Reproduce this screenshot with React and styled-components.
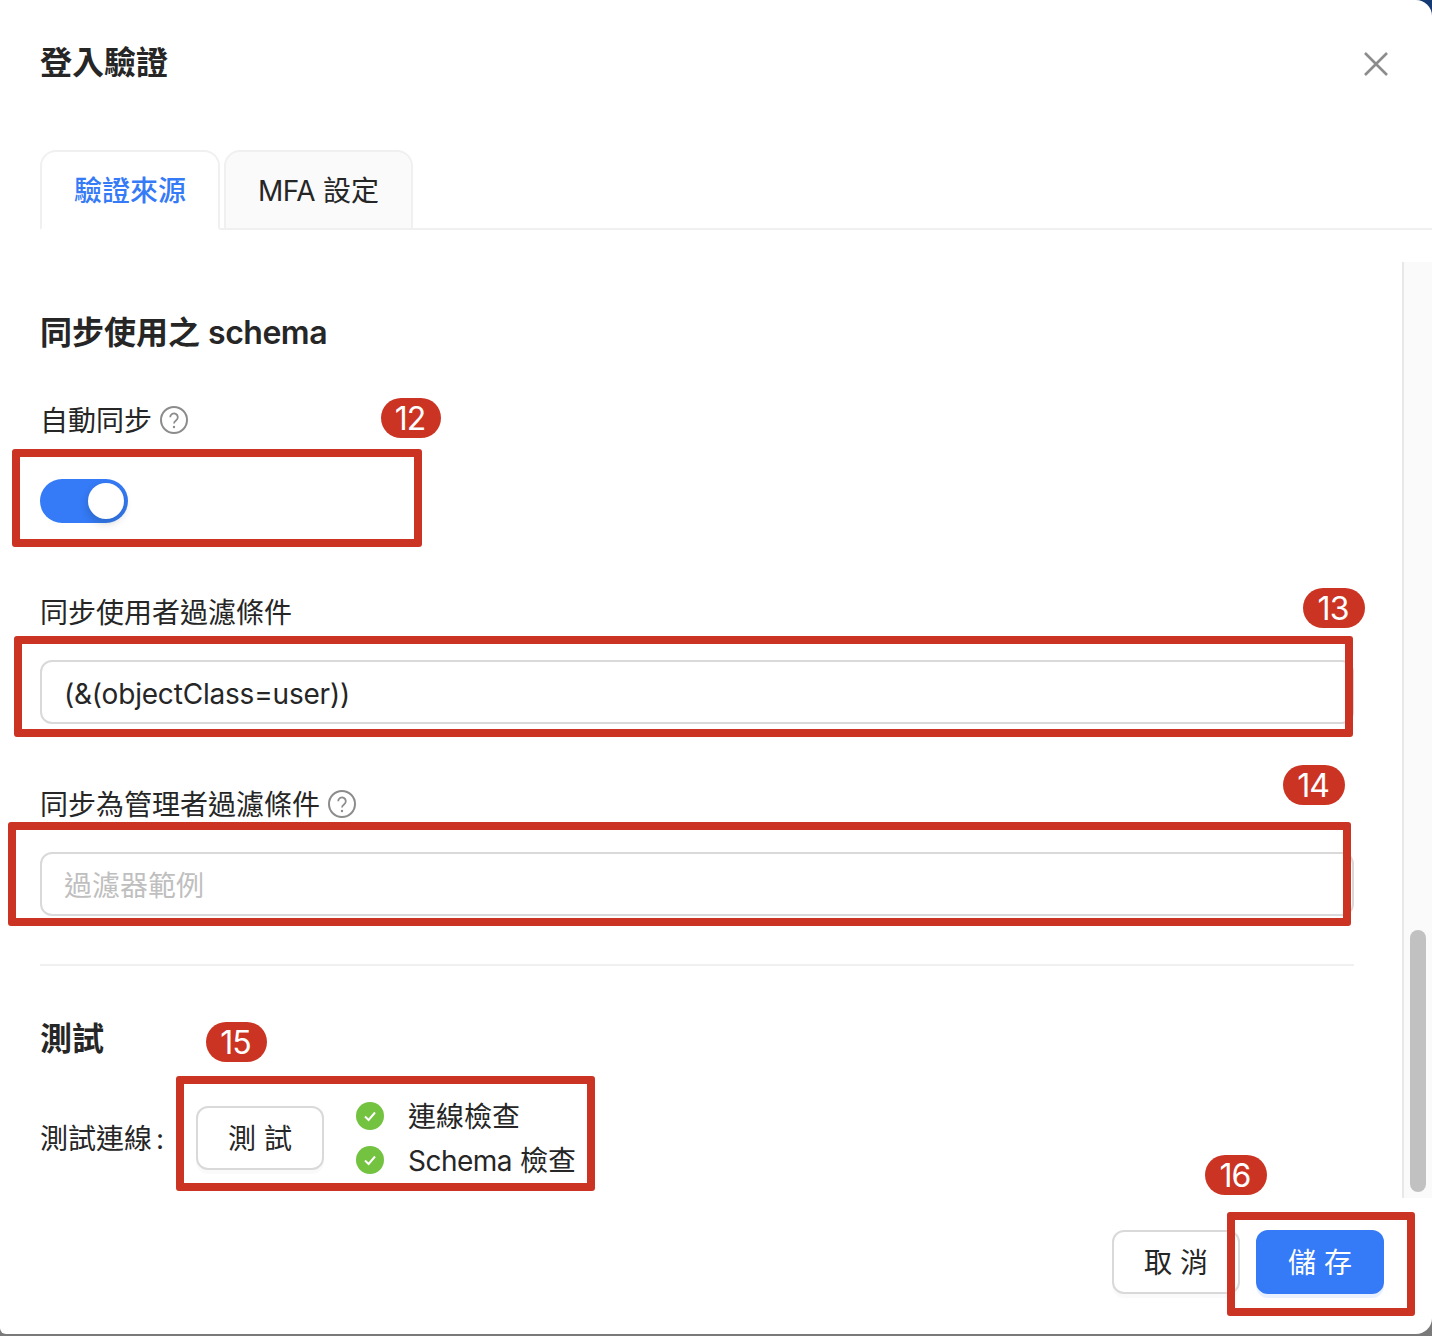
import React from 'react';
import styled, { createGlobalStyle } from 'styled-components';

const App = () => (
  <Page>
    <GlobalStyle />
    <Modal>
      <Header>
        <Title>登入驗證</Title>
        <CloseButton aria-label="close">
          <svg width="26" height="26" viewBox="0 0 26 26">
            <path d="M2 2 L24 24 M24 2 L2 24" stroke="#8c8c8c" strokeWidth="2.6" fill="none" />
          </svg>
        </CloseButton>
      </Header>
      <Tabs>
        <Tab $active>驗證來源</Tab>
        <Tab>
          <span>
            <Latin>MFA</Latin> 設定
          </span>
        </Tab>
      </Tabs>
      <Body>
        <Content>
          <SectionTitle>
            同步使用之 <Latin>schema</Latin>
          </SectionTitle>
          <Label $top={45}>
            自動同步 <HelpIcon />
          </Label>
          <Toggle>
            <Knob />
          </Toggle>
          <Label $top={69}>同步使用者過濾條件</Label>
          <TextInput readOnly defaultValue="(&(objectClass=user))" />
          <Label $top={60}>
            同步為管理者過濾條件 <HelpIcon />
          </Label>
          <TextInput readOnly placeholder="過濾器範例" />
          <Divider />
          <SectionTitle $top={51}>測試</SectionTitle>
          <TestRow>
            <TestLabel>測試連線 :</TestLabel>
            <Button>測 試</Button>
            <CheckList>
              <CheckItem>
                <CheckIcon />
                連線檢查
              </CheckItem>
              <CheckItem>
                <CheckIcon />
                <span>
                  <Latin>Schema</Latin> 檢查
                </span>
              </CheckItem>
            </CheckList>
          </TestRow>
        </Content>
        <ScrollTrack>
          <ScrollThumb />
        </ScrollTrack>
      </Body>
      <Footer>
        <Button>取 消</Button>
        <Button $primary>儲 存</Button>
      </Footer>
    </Modal>

    <Callout $x={12} $y={449} $w={410} $h={98} />
    <Badge $x={381} $y={398} $w={60}>12</Badge>
    <Callout $x={14} $y={636} $w={1339} $h={101} />
    <Badge $x={1303} $y={588}>13</Badge>
    <Callout $x={8} $y={822} $w={1343} $h={104} />
    <Badge $x={1283} $y={765}>14</Badge>
    <Callout $x={176} $y={1076} $w={419} $h={115} />
    <Badge $x={206} $y={1022} $w={61}>15</Badge>
    <Callout $x={1227} $y={1212} $w={188} $h={104} />
    <Badge $x={1205} $y={1155}>16</Badge>
  </Page>
);

const HelpIcon = () => (
  <HelpSvg width="28" height="28" viewBox="0 0 28 28" fill="none" stroke="#8c8c8c" strokeWidth="2">
    <circle cx="14" cy="14" r="13" />
    <path d="M10.2 11.2 a3.8 3.8 0 1 1 6 3.1 c-1.4 1 -2.2 1.7 -2.2 3.3" strokeWidth="1.8" />
    <circle cx="14" cy="21" r="1.2" fill="#8c8c8c" stroke="none" />
  </HelpSvg>
);

const CheckIcon = () => (
  <CheckSvg width="28" height="28" viewBox="0 0 28 28">
    <circle cx="14" cy="14" r="14" fill="#73c240" />
    <path d="M9 14.5 L12.6 18 L19 10.5" stroke="#fff" strokeWidth="2" fill="none" />
  </CheckSvg>
);

export default App;

const GlobalStyle = createGlobalStyle`
  html, body {
    margin: 0;
    padding: 0;
    background: #7a7a7a;
  }

  body {
    font-family: Inter, "Noto Sans CJK TC", sans-serif;
    color: #262626;
  }
`;

const Page = styled.div`
  position: relative;
  width: 1432px;
  height: 1336px;
  overflow: hidden;
  background: linear-gradient(#143a74 0 40px, #7a7a7a 40px);
`;

const Modal = styled.div`
  width: 1432px;
  height: 1334px;
  display: flex;
  flex-direction: column;
  background: #fff;
  border-radius: 0 16px 16px 6px;
`;

const Header = styled.div`
  height: 150px;
  padding: 0 43px 22px 40px;
  box-sizing: border-box;
  display: flex;
  align-items: center;
  justify-content: space-between;
`;

const Title = styled.h1`
  margin: 0 0 2px;
  font-size: 32px;
  line-height: 44px;
  font-weight: 700;
`;

const CloseButton = styled.button`
  display: flex;
  padding: 0;
  background: none;
  border: none;
`;

const Tabs = styled.div`
  height: 80px;
  margin-left: 40px;
  box-sizing: border-box;
  display: flex;
  gap: 4px;
  border-bottom: 2px solid #f0f0f0;
`;

const Tab = styled.div`
  height: 80px;
  padding: 0 32px 2px;
  box-sizing: border-box;
  display: flex;
  align-items: center;
  font-size: 28px;
  font-weight: ${({ $active }) => ($active ? 500 : 400)};
  color: ${({ $active }) => ($active ? '#357af6' : '#262626')};
  background: ${({ $active }) => ($active ? '#fff' : '#fafafa')};
  border: 2px solid #f0f0f0;
  border-bottom: 2px solid ${({ $active }) => ($active ? '#fff' : '#f0f0f0')};
  border-radius: 16px 16px 0 0;
`;

const Latin = styled.span`
  letter-spacing: -0.5px;
`;

const Body = styled.div`
  height: 936px;
  margin-top: 32px;
  display: flex;
  justify-content: space-between;
  overflow: hidden;
`;

const Content = styled.div`
  width: 1314px;
  margin-left: 40px;
  padding-top: 49px;
  display: flex;
  flex-direction: column;
`;

const SectionTitle = styled.h2`
  margin: ${({ $top }) => $top || 0}px 0 0;
  font-size: 32px;
  line-height: 44px;
  font-weight: 600;
`;

const Label = styled.div`
  margin-top: ${({ $top }) => $top}px;
  height: 40px;
  padding-bottom: 2px;
  box-sizing: border-box;
  display: flex;
  align-items: center;
  gap: 8px;
  font-size: 28px;
`;

const HelpSvg = styled.svg`
  margin-top: 2px;
`;

const Toggle = styled.div`
  width: 88px;
  height: 44px;
  margin-top: 39px;
  padding: 4px;
  box-sizing: border-box;
  display: flex;
  justify-content: flex-end;
  background: #357af6;
  border-radius: 22px;
`;

const Knob = styled.div`
  width: 36px;
  height: 36px;
  background: #fff;
  border-radius: 50%;
  box-shadow: 0 4px 8px rgba(0, 35, 11, 0.2);
`;

const TextInput = styled.input`
  height: 64px;
  margin-top: 28px;
  padding: 4px 22px 0;
  box-sizing: border-box;
  font-family: inherit;
  font-size: 28px;
  letter-spacing: -0.19px;
  color: #262626;
  background: #fff;
  border: 2px solid #d9d9d9;
  border-radius: 12px;
  outline: none;

  &::placeholder {
    color: #bfbfbf;
    letter-spacing: 0;
  }
`;

const Divider = styled.div`
  height: 2px;
  margin-top: 48px;
  background: #f0f0f0;
`;

const TestRow = styled.div`
  margin-top: 35px;
  display: flex;
  align-items: center;
`;

const TestLabel = styled.div`
  width: 156px;
  padding-bottom: 2px;
  font-size: 28px;
  word-spacing: -4px;
  white-space: nowrap;
`;

const Button = styled.button`
  width: 128px;
  height: 64px;
  padding: 0 0 2px;
  font-family: inherit;
  font-size: 28px;
  color: ${({ $primary }) => ($primary ? '#fff' : '#262626')};
  background: ${({ $primary }) => ($primary ? '#357af6' : '#fff')};
  border: 2px solid ${({ $primary }) => ($primary ? '#357af6' : '#d9d9d9')};
  border-radius: 12px;
  box-shadow: 0 4px 0 ${({ $primary }) => ($primary ? 'rgba(53, 122, 246, 0.1)' : 'rgba(0, 0, 0, 0.02)')};
`;

const CheckList = styled.div`
  margin-left: 32px;
  display: flex;
  flex-direction: column;
  gap: 4px;
`;

const CheckItem = styled.div`
  height: 40px;
  padding-bottom: 2px;
  box-sizing: border-box;
  display: flex;
  align-items: center;
  gap: 24px;
  font-size: 28px;
  white-space: nowrap;
`;

const CheckSvg = styled.svg`
  margin-top: 2px;
`;

const ScrollTrack = styled.div`
  width: 30px;
  padding: 668px 0 6px 6px;
  box-sizing: border-box;
  display: flex;
  background: #fafafa;
  border-left: 2px solid #e8e8e8;
`;

const ScrollThumb = styled.div`
  width: 16px;
  background: #c1c1c1;
  border-radius: 8px;
`;

const Footer = styled.div`
  flex: 1;
  padding: 32px 48px 0 0;
  display: flex;
  justify-content: flex-end;
  gap: 16px;
`;

const Callout = styled.div`
  position: absolute;
  left: ${({ $x }) => $x}px;
  top: ${({ $y }) => $y}px;
  width: ${({ $w }) => $w}px;
  height: ${({ $h }) => $h}px;
  box-sizing: border-box;
  border: 8px solid #cb3423;
  border-radius: 3px;
`;

const Badge = styled.div`
  position: absolute;
  left: ${({ $x }) => $x}px;
  top: ${({ $y }) => $y}px;
  width: ${({ $w }) => $w || 62}px;
  height: 40px;
  padding: 1px 2px 0 0;
  box-sizing: border-box;
  display: flex;
  align-items: center;
  justify-content: center;
  font-size: 32px;
  letter-spacing: -1px;
  color: #fff;
  background: #cb3423;
  border-radius: 20px;
`;
